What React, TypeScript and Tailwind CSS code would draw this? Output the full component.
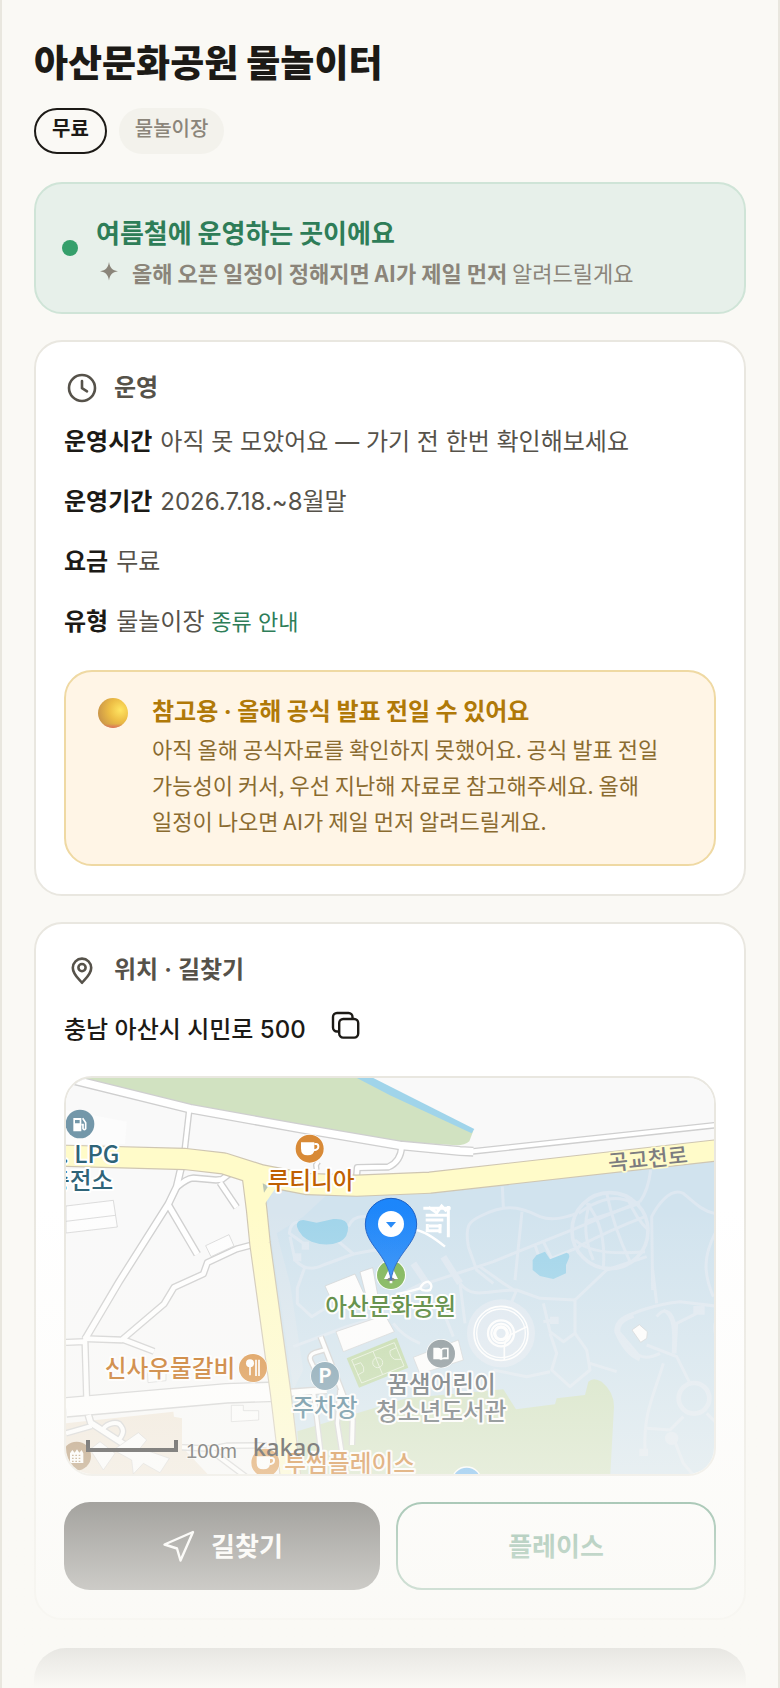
import type { ReactNode } from "react";

function ClockIcon() {
  return (
    <svg className="size-9 shrink-0" viewBox="0 0 36 36" fill="none" stroke="currentColor" strokeWidth="2.6" strokeLinecap="round" strokeLinejoin="round" aria-hidden="true">
      <circle cx="18" cy="18" r="13" />
      <path d="M18 11v7.2l5 3.2" />
    </svg>
  );
}

function PinIcon() {
  return (
    <svg className="size-9 shrink-0" viewBox="0 0 36 36" fill="none" stroke="currentColor" strokeWidth="2.6" strokeLinecap="round" strokeLinejoin="round" aria-hidden="true">
      <path d="M18 30.8c-2.4-3.2-9.2-8-9.2-15a9.2 9.2 0 0 1 18.4 0c0 7-6.8 11.8-9.2 15z" />
      <circle cx="18" cy="15.6" r="3.6" />
    </svg>
  );
}

function CopyIcon() {
  return (
    <svg className="size-8" viewBox="0 0 32 32" fill="none" stroke="currentColor" strokeWidth="2.4" strokeLinejoin="round" aria-hidden="true">
      <rect x="9.2" y="9" width="19" height="18.6" rx="4" />
      <path d="M9.2 21.5H7a4 4 0 0 1-4-4V7a4 4 0 0 1 4-4h11.5a4 4 0 0 1 4 4v2" />
    </svg>
  );
}

function SparkleIcon() {
  return (
    <svg className="size-[26px] shrink-0" viewBox="0 0 26 26" fill="currentColor" aria-hidden="true">
      <path d="M13 3C14.2 9.2 16 11 22 12.200C16 13.400 14.200 15.200 13 21.400C11.800 15.200 10 13.400 4 12.200C10 11 11.800 9.200 13 3z" />
    </svg>
  );
}

function SendIcon() {
  return (
    <svg className="size-9 shrink-0" viewBox="0 0 36 36" fill="none" stroke="currentColor" strokeWidth="2.4" strokeLinejoin="round" aria-hidden="true">
      <path d="M32 4L3.5 16.5L16 20.5L19.5 32.5z" />
    </svg>
  );
}

function GoldBall() {
  return (
    <svg className="mt-2 size-[30px] shrink-0" viewBox="0 0 30 30" aria-hidden="true">
      <defs>
        <radialGradient id="gold" cx="0.74" cy="0.4" r="0.75">
          <stop offset="0" stopColor="#ffe562" />
          <stop offset="0.5" stopColor="#edbd45" />
          <stop offset="1" stopColor="#cb9648" />
        </radialGradient>
        <linearGradient id="goldEdge" x1="0" y1="0" x2="0" y2="1">
          <stop offset="0.86" stopColor="#e06a60" stopOpacity="0" />
          <stop offset="1" stopColor="#e06a60" stopOpacity="0.9" />
        </linearGradient>
      </defs>
      <circle cx="15" cy="15" r="15" fill="url(#gold)" />
      <circle cx="15" cy="15" r="15" fill="url(#goldEdge)" />
    </svg>
  );
}

const roads: { d: string; w: number }[] = [
  { d: "M18 24L390 116L720 175L1020 226L1200 243L1240 245", w: 22 },
  { d: "M1200 243L1240 244L1980 164", w: 12 },
  { d: "M388 118L374 240", w: 12 },
  { d: "M364 290L350 350L325 402L178 634L75 808", w: 16 },
  { d: "M346 355C365 340 380 325 400 324L468 330L486 328L515 306", w: 14 },
  { d: "M480 338L530 412", w: 14 },
  { d: "M325 405L412 553", w: 16 },
  { d: "M575 525L530 537L442 578L430 612L342 652L312 702L185 810L70 806", w: 14 },
  { d: "M185 807L282 844", w: 14 },
  { d: "M18 817L75 815L80 985", w: 14 },
  { d: "M890 316L892 293L985 291Q1022 275 1025 230", w: 14 },
  { d: "M18 1012L330 985L500 970L650 965", w: 54 },
  { d: "M690 968L800 960", w: 18 },
  { d: "M85 1035L92 1058L215 1138", w: 16 },
  { d: "M125 1085C135 1060 165 1055 178 1062C195 1080 190 1092 178 1108", w: 12 },
  { d: "M18 1090L95 1068", w: 12 },
  { d: "M366 1132L450 1136L500 1127L620 1126", w: 12 },
  { d: "M440 1132L560 1222", w: 12 },
  { d: "M782 800L842 955L878 1050L876 1125", w: 12 },
  { d: "M792 840L765 848Q745 855 752 872L768 905", w: 10 },
  { d: "M760 960L784 1160", w: 10 },
  { d: "M840 960L832 1060L846 1150", w: 10 },
  { d: "M770 300L768 285L775 275", w: 10 },
];

const yellowRoads: { d: string; w: number }[] = [
  { d: "M0 257L375 267L490 280L600 315L740 342L890 347L1110 338L1980 240", w: 60 },
  { d: "M575 300L590 420L600 520L611 600L662 970L694 1240", w: 58 },
];

const parkPaths = [
  "M1327 350L1330 412M1225 530C1215 470 1225 455 1262 438C1330 405 1370 405 1440 440C1480 455 1520 440 1545 432",
  "M1225 530L1250 600L1300 640M1386 425L1365 630M1100 640L1300 575L1540 478L1740 395",
  "M1740 395Q1765 360 1772 300",
  "M1425 525L1440 570M1450 515L1475 565L1560 530",
  "M865 470C880 430 920 435 960 450M830 510L880 552L945 540L990 545",
  "M730 520L688 490C690 460 710 450 730 460M690 500L705 570Q740 610 790 585L880 552",
  "M735 590L712 655L712 700L755 740L820 700",
  "M700 830L860 770L960 740",
  "M1200 640L1215 760M1200 640C1240 690 1280 660 1370 660L1440 685L1545 690",
  "M1545 690L1640 600L1760 560M1545 690L1545 790L1510 815L1470 785L1450 700",
  "M1470 790L1490 850L1475 900L1530 950L1590 900L1580 840L1545 790M1590 880L1670 905",
  "M1260 590L1330 640L1370 665M1370 660L1345 720M1450 755L1480 750",
  "M1300 900L1400 920L1470 905",
  "M1778 660L1775 440C1790 410 1830 350 1870 370C1905 400 1930 425 1965 430",
  "M1965 490C1930 560 1930 610 1960 680M1778 600L1790 700",
  "M1690 750C1700 730 1800 700 1860 695L1965 708M1810 720C1850 740 1840 810 1840 850M1790 740C1830 690 1860 760 1840 850",
  "M1680 790L1735 855Q1760 870 1800 850M1760 825L1850 860L1890 940M1810 880C1780 980 1750 1030 1755 1140",
  "M1845 850L1850 760L1910 730M1760 1075L1830 1080L1870 1040M1940 1030L1970 1060M1835 1090L1870 1180L1900 1215",
  "M1990 840Q1960 800 1965 760M1000 760Q1030 800 1080 820M1140 700L1180 800",
];

const POI = "Noto Sans CJK KR, Noto Sans, sans-serif";

function MapLabel({ x, y, fill, anchor = "middle", children }: { x: number; y: number; fill: string; anchor?: "middle" | "end"; children: ReactNode }) {
  return (
    <text x={x} y={y} textAnchor={anchor} fill={fill} stroke="#ffffff" strokeWidth="12" strokeLinejoin="round" paintOrder="stroke" fontFamily={POI} fontSize="71" fontWeight="500">
      {children}
    </text>
  );
}

function Cup({ x, y }: { x: number; y: number }) {
  return (
    <g transform={`translate(${x} ${y})`}>
      <circle r="44" fill="#fff" />
      <circle r="42" fill="#d88a37" />
      <path d="M-26 -19H14V0Q14 20 -6 20Q-26 20 -26 0z" fill="#fff" />
      <path d="M14 -14H20Q26 -14 26 -6Q26 3 12 5" fill="none" stroke="#fff" strokeWidth="6" />
    </g>
  );
}

function ParkMap() {
  return (
    <svg className="block h-[396px] w-full" viewBox="18 24 1944 1188" preserveAspectRatio="xMidYMid slice" role="img" aria-label="아산문화공원 지도">
      <defs>
        <linearGradient id="marker" x1="0" y1="0" x2="0" y2="1">
          <stop offset="0" stopColor="#1c86fb" />
          <stop offset="1" stopColor="#2287f7" />
        </linearGradient>
      </defs>
      <rect x="0" y="0" width="1990" height="1240" fill="#f9f9f9" />
      <path d="M18 120L200 155L195 222L18 222z" fill="#fcfcfc" />

      <path d="M60 24H900L1240 182L1228 214Q1215 226 1190 226L1020 215L720 165L390 110z" fill="#d1e2c1" />
      <path d="M883 20H932L1243 177L1235 190L990 76z" fill="#a0d4ea" />

      <path d="M18 1060L340 1025L342 1040L366 1045V1130L450 1220H18z" fill="#f0e6d8" />
      <path d="M632 355L885 375L1110 368L1980 270V1240H720L640 650L614 400z" fill="#d1e3ee" />
      <path d="M640 362L800 375L730 440L650 490L690 640L730 900L700 960L620 410z" fill="#d8e5ee" />
      <path d="M712 1084L1040 985L1330 958L1368 1018L1485 1003L1490 985L1575 975L1585 935Q1600 920 1625 935Q1662 965 1662 1010L1650 1230H720z" fill="#cfe0bd" />

      <g fill="none" stroke="#dee8f1" strokeWidth="9" strokeLinejoin="round">
        {parkPaths.map((d) => (
          <path key={d} d={d} />
        ))}
        <path d="M1060 580L1100 640L1000 690M1150 560L1200 640" strokeWidth="20" />
        <circle cx="1650" cy="482" r="114" strokeWidth="11" />
        <path d="M1556 430Q1650 360 1720 400M1545 510Q1600 560 1755 545M1580 400Q1640 470 1630 595M1640 368Q1660 470 1710 575M1700 380Q1730 450 1765 480M1555 530Q1650 480 1755 440M1590 400Q1560 480 1600 570M1575 455L1650 430L1740 400" />
        <circle cx="1902" cy="985" r="46" strokeWidth="14" />
        <path d="M1720 735Q1670 750 1672 785Q1700 850 1740 865" strokeWidth="18" />
      </g>
      <g fill="#dee8f1">
        <circle cx="1323" cy="790" r="102" />
        <rect x="725" y="515" width="22" height="24" />
        <rect x="700" y="550" width="24" height="24" />
        <rect x="1470" y="740" width="26" height="22" />
        <rect x="1900" y="708" width="34" height="26" />
        <rect x="1738" y="1136" width="26" height="22" />
        <circle cx="1835" cy="1105" r="20" />
      </g>

      <path d="M711 470Q708 450 730 450L770 458L820 447Q862 444 864 470Q866 500 840 515Q800 532 755 515Q720 500 711 470z" fill="#a0d4ea" />
      <path d="M1418 570L1430 555L1455 545L1470 568L1520 548Q1532 552 1526 566L1518 585V610L1480 627L1440 618L1418 600z" fill="#a0d4ea" />

      <g fill="none" stroke="#fff">
        <circle cx="1323" cy="790" r="81" strokeWidth="5" />
        <circle cx="1323" cy="790" r="73" strokeWidth="4" />
        <circle cx="1323" cy="790" r="39" strokeWidth="7" />
        <circle cx="1323" cy="790" r="29" strokeWidth="6" />
        <circle cx="1323" cy="790" r="19" strokeWidth="10" />
        <path d="M1333 870V830Q1335 810 1350 795L1400 770" strokeWidth="5" />
        <path d="M1068 480Q1100 485 1155 530M1010 672Q1050 665 1080 655Q1090 635 1105 635Q1120 645 1110 660Q1090 665 1080 655" strokeWidth="7" />
        <path d="M1090 415H1172M1097 436H1165M1165 408V502M1106 412L1130 428L1145 408L1160 424M1097 450H1150M1107 468H1145M1097 482H1142M1102 462V486M1140 462V490" strokeWidth="9" />
      </g>

      <g fill="none" stroke="#cfcfcf" strokeLinejoin="round">
        {roads.map((r) => (
          <path key={r.d} d={r.d} strokeWidth={r.w + 8} />
        ))}
      </g>
      <g fill="none" stroke="#ffffff" strokeLinejoin="round">
        {roads.map((r) => (
          <path key={r.d} d={r.d} strokeWidth={r.w} />
        ))}
      </g>
      <g fill="none" stroke="#cfc6b2" strokeLinejoin="round">
        {yellowRoads.map((r) => (
          <path key={r.d} d={r.d} strokeWidth={r.w + 7} />
        ))}
      </g>
      <g fill="none" stroke="#fffbc9" strokeLinejoin="round">
        {yellowRoads.map((r) => (
          <path key={r.d} d={r.d} strokeWidth={r.w} />
        ))}
      </g>
      <path d="M600 350H650L612 405z" fill="#fffbc9" />
      <path d="M608 340L625 348L612 368z" fill="#bcc7b4" />

      <g fill="#fdfdfd" stroke="#cccccc" strokeWidth="2">
        <path d="M18 408L160 391L172 471L18 489z" />
        <path d="M18 454L166 436" />
        <path d="M437 527L507 494L522 528L453 560z" />
        <path d="M514 1006H550V1022H596V1050L514 1055z" />
        <path d="M262 900L318 896V932L264 938z" />
        <path d="M795 648L885 612L925 700L830 725z" />
        <path d="M900 606L938 593L958 700L925 705z" />
        <path d="M828 785L975 735L1003 785L850 845z" />
        <path d="M1060 862L1195 810L1210 870L1080 912z" />
        <path d="M1716 780L1738 764L1762 785L1760 805L1742 817z" />
        <path d="M90 1138L120 1115L165 1150L130 1200z" />
        <path d="M160 1140L235 1088L260 1110L240 1135L285 1150L328 1165L300 1208L250 1180L220 1212L215 1170z" />
      </g>
      <path d="M860 865L1010 803L1045 893L897 953z" fill="#bfd8a6" />
      <g fill="none" stroke="#e6f0da" strokeWidth="3">
        <path d="M875 870L1003 818L1032 888L905 939z M939 844L968 914" />
        <circle cx="953" cy="878" r="15" />
        <path d="M881 886L902 878Q915 892 911 905L893 915M1009 833L990 842Q988 860 1004 868L1024 868" />
      </g>

      <MapLabel x={178} y={278} anchor="end" fill="#2f6478">. LPG</MapLabel>
      <MapLabel x={160} y={357} anchor="end" fill="#2f6478">충전소</MapLabel>
      <MapLabel x={753} y={356} fill="#c06000">루티니아</MapLabel>
      <text transform="translate(1766 290) rotate(-6)" textAnchor="middle" fill="#7c7c80" stroke="#fffbc9" strokeWidth="10" strokeLinejoin="round" paintOrder="stroke" fontFamily={POI} fontSize="65" fontWeight="500">
        곡교천로
      </text>

      <g transform="translate(60 162)">
        <circle r="43" fill="#7397a9" />
        <path d="M-20 -18H4V22H-20z" fill="#fff" />
        <path d="M-15 -12H-1V-2H-15z" fill="#7397a9" />
        <path d="M4 2H9V14Q12 20 17 14V-4L8 -17" fill="none" stroke="#fff" strokeWidth="5" />
      </g>
      <Cup x={749} y={236} />

      <g transform="translate(579 894)">
        <circle r="44" fill="#fff" />
        <circle r="42" fill="#d88a37" />
        <circle cx="-9" cy="-14" r="12" fill="#fff" />
        <path d="M-9 -5V22M9 -25V24M18 -25V24" stroke="#fff" strokeWidth="5" />
      </g>
      <MapLabel x={330} y={921} fill="#bf6000">신사우물갈비</MapLabel>

      <g transform="translate(795 918)">
        <circle r="44" fill="#fff" />
        <circle r="42" fill="#7397a9" />
        <text y="22" textAnchor="middle" fill="#fff" fontFamily={POI} fontSize="60" fontWeight="700">P</text>
      </g>
      <MapLabel x={795} y={1037} fill="#3c7188">주차장</MapLabel>

      <g transform="translate(1143 851)">
        <circle r="44" fill="#fff" />
        <circle r="42" fill="#7d8a90" />
        <path d="M-23 -18H-8Q-1 -18 0 -13Q1 -18 8 -18H23V17H8Q2 17 0 20Q-2 17 -8 17H-23z" fill="#fff" />
        <path d="M4 -11Q6 -13 10 -13H18V11H10Q6 11 4 13z" fill="#7d8a90" />
      </g>
      <MapLabel x={1144} y={970} fill="#4f585e">꿈샘어린이</MapLabel>
      <MapLabel x={1144} y={1049} fill="#4f585e">청소년도서관</MapLabel>

      <circle cx="993" cy="615" r="45" fill="#fff" />
      <circle cx="993" cy="615" r="42" fill="#79b250" />
      <path d="M993 585L1014 627H997V640H989V627H972z" fill="#fff" />
      <path d="M979 630Q993 614 1007 630Q993 636 979 630z" fill="#6f7477" />
      <MapLabel x={992} y={734} fill="#447a26">아산문화공원</MapLabel>

      <path d="M993 385A77 77 0 0 1 1070 462C1070 525 1005 550 993 630C981 550 916 525 916 462A77 77 0 0 1 993 385z" fill="url(#marker)" stroke="#1c5fc4" strokeWidth="3" />
      <circle cx="993" cy="462" r="39" fill="#fff" />
      <path d="M978 456H1008L993 473z" fill="#2287f7" />

      <g transform="translate(50 1158)">
        <circle r="43" fill="#a8845a" />
        <path d="M-20 -8L-13 -18L-6 -10L1 -20L8 -10L15 -18L20 -8V21H-20z" fill="#fff" />
        <path d="M-14 -2H16M-14 7H16M-14 16H16" stroke="#a8845a" strokeWidth="4" strokeDasharray="5 5" />
      </g>
      <Cup x={616} y={1178} />
      <MapLabel x={869} y={1205} fill="#c86a0a">투썸플레이스</MapLabel>
      <circle cx="1220" cy="1235" r="46" fill="#fff" />
      <circle cx="1220" cy="1235" r="42" fill="#58adf0" />

      <path d="M84 1110V1140H348V1110" fill="none" stroke="#0c0c0c" strokeWidth="12" />
      <text x="378" y="1163" fill="#222" stroke="#fff" strokeOpacity="0.6" strokeWidth="6" paintOrder="stroke" fontFamily="Liberation Sans, Arial, sans-serif" fontSize="61">100m</text>
      <text x="578" y="1157" fill="#0c0c0c" fontFamily="Noto Sans, sans-serif" fontSize="71" fontWeight="500">kakao</text>
    </svg>
  );
}

function Card({ icon, title, children }: { icon: ReactNode; title: string; children: ReactNode }) {
  return (
    <section className="mt-[26px] rounded-[28px] border-2 border-[#e9e7e0] bg-white px-7 pt-7 pb-7">
      <h2 className="flex items-center gap-[14px] text-2xl font-semibold text-[#56524a]">
        {icon}
        {title}
      </h2>
      {children}
    </section>
  );
}

function Row({ label, children }: { label: string; children: ReactNode }) {
  return (
    <div className="flex items-baseline gap-2 text-2xl leading-10">
      <dt className="font-bold text-[#1c1a16]">{label}</dt>
      <dd className="text-[#56524a]">{children}</dd>
    </div>
  );
}

export default function App() {
  return (
    <main className="relative h-screen overflow-hidden border-x-2 border-[#e9e7df] bg-[#faf9f5] px-8 pt-10 font-[Inter,'Noto_Sans_CJK_KR',sans-serif] break-keep">
      <h1 className="text-[37px] leading-[48px] font-extrabold text-[#1c1a16]">아산문화공원 물놀이터</h1>

      <ul className="mt-5 flex gap-3 text-xl leading-7">
        <li className="h-[46px] rounded-full border-2 border-[#1c1a16] px-4 pt-[5px] font-bold text-[#1c1a16]">무료</li>
        <li className="h-[46px] rounded-full bg-[#f3f2ec] px-4 pt-[7px] font-medium text-[#8b857a]">물놀이장</li>
      </ul>

      <section className="mt-7 flex items-center gap-[18px] rounded-[28px] border-2 border-[#cfe4d7] bg-[#e7f0ea] px-[26px] font-['Noto_Sans_CJK_KR',sans-serif]">
        <span className="size-4 shrink-0 rounded-full bg-[#359f6b]" />
        <div className="pt-7 pb-5">
          <p className="text-[26px] leading-10 font-bold text-[#2e7d58]">여름철에 운영하는 곳이에요</p>
          <p className="flex items-center gap-[10px] text-[22px] leading-10 text-[#8b857a]">
            <SparkleIcon />
            <span>
              <strong className="font-bold">올해 오픈 일정이 정해지면 AI가 제일 먼저</strong> 알려드릴게요
            </span>
          </p>
        </div>
      </section>

      <Card icon={<ClockIcon />} title="운영">
        <dl className="mt-4 flex flex-col gap-5">
          <Row label="운영시간">아직 못 모았어요 — 가기 전 한번 확인해보세요</Row>
          <Row label="운영기간">2026.7.18.~8월말</Row>
          <Row label="요금">무료</Row>
          <Row label="유형">
            물놀이장 <button type="button" className="text-[22px] text-[#2e7d58]">종류 안내</button>
          </Row>
        </dl>
        <div className="mt-7 flex gap-6 rounded-[28px] border-2 border-[#efd9a3] bg-[#fff5e6] pt-[18px] pr-8 pb-[26px] pl-8 font-['Noto_Sans_CJK_KR',sans-serif]">
          <GoldBall />
          <div>
            <p className="h-10 text-2xl leading-10 font-bold text-[#b07908]">
              참고용 <span className="font-[Inter,sans-serif]">·</span> 올해 공식 발표 전일 수 있어요
            </p>
            <p className="text-[22px] leading-9 text-[#8a6b30]">
              아직 올해 공식자료를 확인하지 못했어요. 공식 발표 전일 가능성이 커서, 우선 지난해 자료로 참고해주세요. 올해 일정이 나오면 AI가 제일 먼저 알려드릴게요.
            </p>
          </div>
        </div>
      </Card>

      <Card icon={<PinIcon />} title="위치 · 길찾기">
        <div className="mt-[22px] flex items-start gap-6 text-2xl leading-10 font-medium text-[#1c1a16]">
          <address className="not-italic">충남 아산시 시민로 500</address>
          <button type="button" aria-label="주소 복사">
            <CopyIcon />
          </button>
        </div>
        <div className="mt-[26px] overflow-hidden rounded-[28px] border-2 border-[#e9e7e0]">
          <ParkMap />
        </div>
        <div className="mt-[26px] flex gap-4 text-[26px] font-bold">
          <a href="#directions" className="flex h-[88px] flex-1 items-center justify-center gap-[14px] rounded-[26px] bg-[#1c1a16] text-white">
            <SendIcon />
            길찾기
          </a>
          <a href="#place" className="flex h-[88px] flex-1 items-center justify-center rounded-[26px] border-2 border-[#2e7d58] text-[#2e7d58]">
            플레이스
          </a>
        </div>
      </Card>

      <section className="mt-7 h-40 rounded-[32px] bg-[#1c1a16]" />

      <div className="pointer-events-none absolute -inset-x-0.5 bottom-0 h-[480px] bg-linear-to-b from-[#faf9f5]/0 to-[#faf9f5]" />
    </main>
  );
}
